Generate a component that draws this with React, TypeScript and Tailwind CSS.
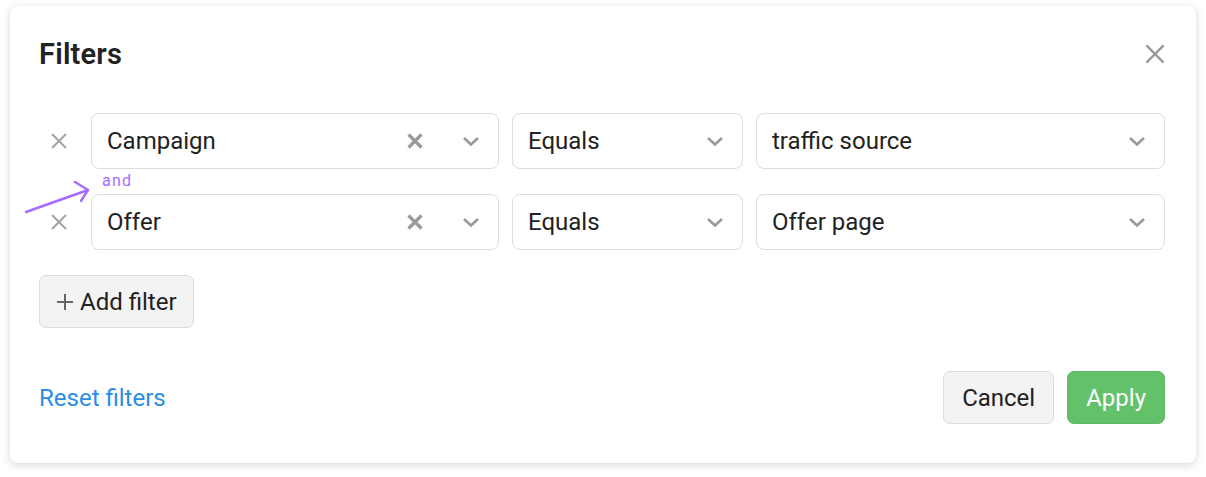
import React from "react";

const font = { fontFamily: "Roboto, 'Noto Sans', Arial, sans-serif" };

function ThinX({ size = 18, color = "#9e9e9e", sw = 2 }: { size?: number; color?: string; sw?: number }) {
  return (
    <svg width={size} height={size} viewBox="0 0 18 18" fill="none">
      <path d="M2 2 L16 16 M16 2 L2 16" stroke={color} strokeWidth={sw} strokeLinecap="butt" />
    </svg>
  );
}

function BoldX() {
  return (
    <svg width="18" height="18" viewBox="0 0 18 18" fill="none">
      <path d="M2.5 2.5 L15.5 15.5 M15.5 2.5 L2.5 15.5" stroke="#9a9a9a" strokeWidth="3.2" />
    </svg>
  );
}

function Chevron() {
  return (
    <svg width="18" height="12" viewBox="0 0 18 12" fill="none">
      <path d="M2 3 L9 9.5 L16 3" stroke="#9a9a9a" strokeWidth="2.6" strokeLinejoin="miter" />
    </svg>
  );
}

function SelectBox({ label, clearable, className }: { label: string; clearable?: boolean; className: string }) {
  return (
    <div
      className={`h-[56px] rounded-[8px] border border-[#dcdcdc] bg-white flex items-center pl-[15px] pr-[18px] ${className}`}
    >
      <span className="flex-1 text-[24px] text-[#222] leading-none">{label}</span>
      {clearable && (
        <span className="w-[18px] flex items-center justify-center mr-[38px]">
          <BoldX />
        </span>
      )}
      <Chevron />
    </div>
  );
}

function Row({ field, op, value }: { field: string; op: string; value: string }) {
  return (
    <div className="flex items-center gap-[12px]">
      <div className="w-[40px] flex items-center justify-center">
        <ThinX size={18} color="#a3a3a3" sw={2} />
      </div>
      <SelectBox label={field} clearable className="w-[408px]" />
      <SelectBox label={op} className="w-[231px] ml-[1px]" />
      <SelectBox label={value} className="flex-1 ml-[1px]" />
    </div>
  );
}

export default function App() {
  return (
    <div className="w-[1206px] h-[477px] bg-white pt-[6px] pl-[10px]" style={font}>
      <div className="relative w-[1186px] h-[457px] bg-white rounded-[8px] shadow-[0_2px_10px_rgba(0,0,0,0.16)] pl-[29px] pr-[31px] pt-[28px]">
        <div className="h-[40px] flex items-center justify-between">
          <h2 className="text-[29px] font-semibold text-[#222] leading-none tracking-[0.2px]">Filters</h2>
          <div className="mr-[-1px]">
            <ThinX size={22} color="#9a9a9a" sw={2} />
          </div>
        </div>

        <div className="mt-[39px]">
          <Row field="Campaign" op="Equals" value="traffic source" />
          <div className="h-[25px] pl-[63px] flex items-center">
            <span className="text-[16px] leading-none text-[#a66cff] tracking-[1.2px] mt-[-1px]">and</span>
          </div>
          <Row field="Offer" op="Equals" value="Offer page" />
        </div>

        <svg className="absolute left-[14px] top-[174px]" width="70" height="36" viewBox="0 0 70 36" fill="none">
          <path d="M2 32 L64 10" stroke="#a66cff" strokeWidth="2.4" strokeLinecap="round" />
          <path d="M51 2 L64 10 L57 21" stroke="#a66cff" strokeWidth="2.4" strokeLinecap="round" strokeLinejoin="round" />
        </svg>

        <div className="mt-[25px]">
          <button className="h-[53px] px-[16px] rounded-[7px] border border-[#dcdcdc] bg-[#f3f3f3] flex items-center gap-[6px] text-[24px] text-[#222]">
            <svg width="18" height="18" viewBox="0 0 18 18" fill="none">
              <path d="M9 1 V17 M1 9 H17" stroke="#666" strokeWidth="2" />
            </svg>
            <span className="leading-none">Add filter</span>
          </button>
        </div>

        <div className="mt-[43px] flex items-center justify-between">
          <span className="text-[24px] text-[#2a8ee6] leading-none">Reset filters</span>
          <div className="flex items-center gap-[13px]">
            <button className="h-[53px] px-[18px] rounded-[7px] border border-[#dcdcdc] bg-[#f3f3f3] text-[24px] text-[#222] leading-none">
              Cancel
            </button>
            <button className="h-[53px] px-[18px] rounded-[7px] border border-[#5cb963] bg-[#63c16a] text-[24px] text-white leading-none">
              Apply
            </button>
          </div>
        </div>
      </div>
    </div>
  );
}
